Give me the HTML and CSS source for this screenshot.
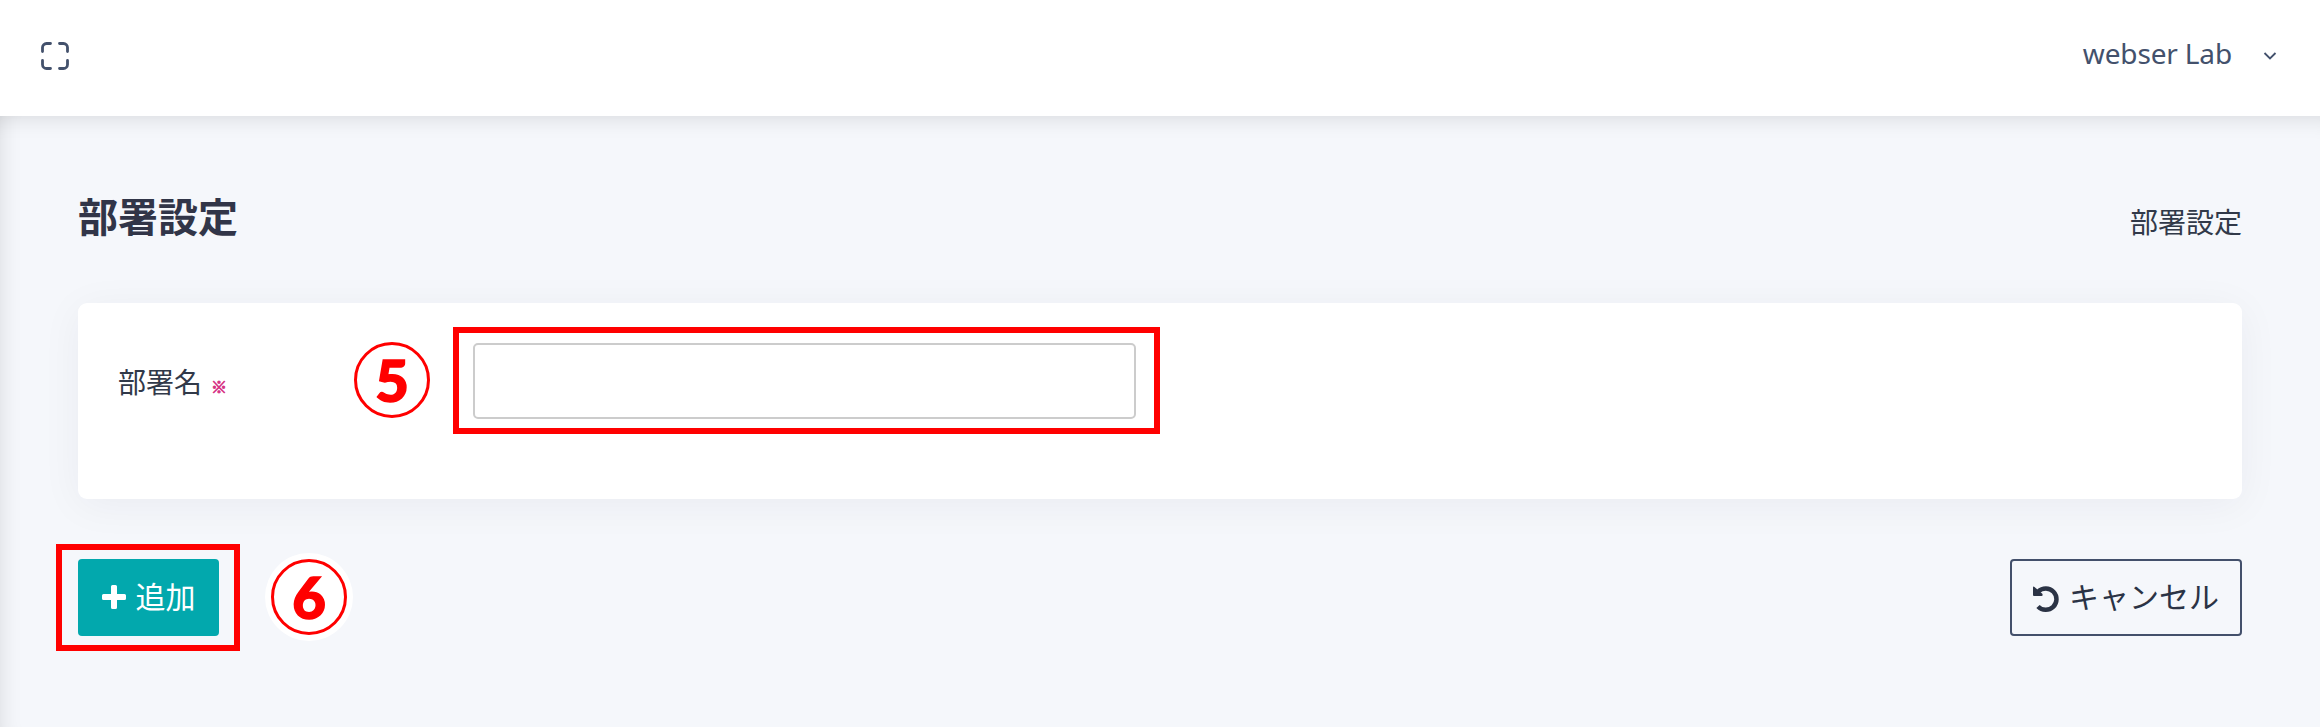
FILE: index.html
```html
<!DOCTYPE html>
<html lang="ja">
<head>
<meta charset="utf-8">
<title>部署設定</title>
<link rel="stylesheet" href="styles.css">
</head>
<body>
<div class="page">
  <header class="topbar">
    <svg class="icon-full" viewBox="0 0 28 28"><path d="M1.500 9.500V5.500a4 4 0 0 1 4-4h4M18.500 1.500h4a4 4 0 0 1 4 4v4M26.500 18.500v4a4 4 0 0 1-4 4h-4M9.500 26.500h-4a4 4 0 0 1-4-4v-4"/></svg>
    <div class="user"><span class="user-name">webser Lab</span><svg class="icon-chevron" viewBox="0 0 14 10"><path d="M1.500 2L7 7.500L12.500 2"/></svg></div>
  </header>
  <main class="content">
    <div class="heading">
      <h1 class="title">部署設定</h1>
      <span class="crumb">部署設定</span>
    </div>
    <section class="card">
      <label class="label" for="dept">部署名<span class="required">※</span></label>
      <div class="step">5</div>
      <div class="field"><input class="input" id="dept" type="text"><div class="mark mark-field"></div></div>
    </section>
    <div class="actions">
      <div class="action-left">
        <div class="add-wrap">
          <button class="btn btn-add" type="button"><svg class="icon-plus" viewBox="0 0 24 24"><path d="M10.500 0h3a1.500 1.500 0 0 1 1.500 1.500V9h7.500A1.500 1.500 0 0 1 24 10.500v3a1.500 1.500 0 0 1-1.500 1.500H15v7.500a1.500 1.500 0 0 1-1.500 1.500h-3A1.500 1.500 0 0 1 9 22.500V15H1.500A1.500 1.500 0 0 1 0 13.500v-3A1.500 1.500 0 0 1 1.500 9H9V1.500A1.500 1.500 0 0 1 10.500 0z"/></svg><span class="btn-text">追加</span></button>
          <div class="mark mark-add"></div>
        </div>
        <div class="step step-halo">6</div>
      </div>
      <button class="btn btn-cancel" type="button"><svg class="icon-undo" viewBox="0 0 26 26"><path class="undo-arc" d="M5.300 6.500A10.700 10.700 0 1 1 5 21.500"/><path class="undo-head" d="M0 2.500Q0 .8 1.500 2L9.300 8.800Q10.500 10.500 8.700 10.900H1Q0 10.900 0 9.900z"/></svg><span class="btn-text">キャンセル</span></button>
    </div>
  </main>
</div>
</body>
</html>
```
FILE: styles.css
```css
* { box-sizing: border-box; }
body {
  margin: 0;
  background: #f5f7fb;
  color: #313949;
  font-family: "Noto Sans", "Noto Sans CJK JP", sans-serif;
}
.page {
  height: 727px;
  overflow: hidden;
  display: flex;
  flex-direction: column;
}
.topbar {
  height: 116px;
  flex: none;
  padding: 0 43px 0 41px;
  display: flex;
  align-items: center;
  justify-content: space-between;
  background: #fff;
}
.icon-full { width: 28px; height: 28px; margin-top: -4px; fill: none; stroke: #43516c; stroke-width: 2.800; stroke-linecap: round; }
.user { display: flex; align-items: center; gap: 31px; margin-top: -10px; color: #43516c; font-size: 28px; line-height: 40px; }
.user-name { letter-spacing: -.15px; }
.icon-chevron { width: 14px; height: 10px; margin-top: 6px; fill: none; stroke: #43516c; stroke-width: 1.800; }
.content {
  flex: 1;
  padding: 69px 78px 0;
  box-shadow: inset 0 24px 22px -22px rgba(0, 0, 0, .12), inset 22px 0 22px -22px rgba(0, 0, 0, .12);
}
.heading { display: flex; justify-content: space-between; align-items: flex-start; height: 118px; }
.title { margin: 0; font: bold 40px/60px "Noto Sans CJK JP", sans-serif; color: #313548; }
.crumb { font: 28px/40px "Noto Sans CJK JP", sans-serif; margin-top: 16px; }
.card {
  height: 196px;
  padding: 38px 40px;
  display: flex;
  align-items: flex-start;
  background: #fff;
  border-radius: 9px;
  box-shadow: 0 6px 42px rgba(8, 21, 66, .05);
}
.label { width: 236px; font: 28px/40px "Noto Sans CJK JP", sans-serif; margin-top: 20px; }
.required { font-size: 16px; font-weight: bold; color: #d63384; margin-left: 9px; -webkit-text-stroke: .8px #d63384; }
.step {
  width: 76px;
  height: 76px;
  border: 3px solid #f00;
  border-radius: 50%;
  background: #fff;
  color: #f00;
  font: 900 58px/69px Lato, sans-serif;
  -webkit-text-stroke: 1.5px #f00;
  text-align: center;
}
.card .step { margin-top: 1px; }
.field { position: relative; margin: 2px 0 0 43px; }
.input { display: block; width: 663px; height: 76px; border: 2px solid #ccc; border-radius: 5px; background: #fff; }
.mark { position: absolute; border: 6px solid #f00; pointer-events: none; }
.mark-field { inset: -16px -24px -15px -20px; }
.actions { display: flex; justify-content: space-between; margin-top: 60px; }
.action-left { display: flex; align-items: center; gap: 52px; }
.add-wrap { position: relative; }
.mark-add { inset: -15px -21px -15px -22px; }
.step-halo { box-shadow: 0 0 0 6px #fff; margin-top: -1px; }
.btn {
  height: 77px;
  padding: 0;
  display: flex;
  align-items: center;
  justify-content: center;
  border-radius: 4px;
  font: 30px/44px "Noto Sans CJK JP", sans-serif;
}
.btn-text { margin-top: -6px; }
.btn-add { width: 141px; border: 0; background: #02a8ad; color: #fff; gap: 10px; }
.btn-cancel { width: 232px; border: 2px solid #43506b; background: transparent; color: #2b3345; gap: 10px; }
.icon-plus { width: 24px; height: 24px; fill: #fff; margin-top: -1px; }
.icon-undo { width: 26px; height: 26px; overflow: visible; }
.undo-arc { fill: none; stroke: #2b3345; stroke-width: 4.500; }
.undo-head { fill: #2b3345; }
```
